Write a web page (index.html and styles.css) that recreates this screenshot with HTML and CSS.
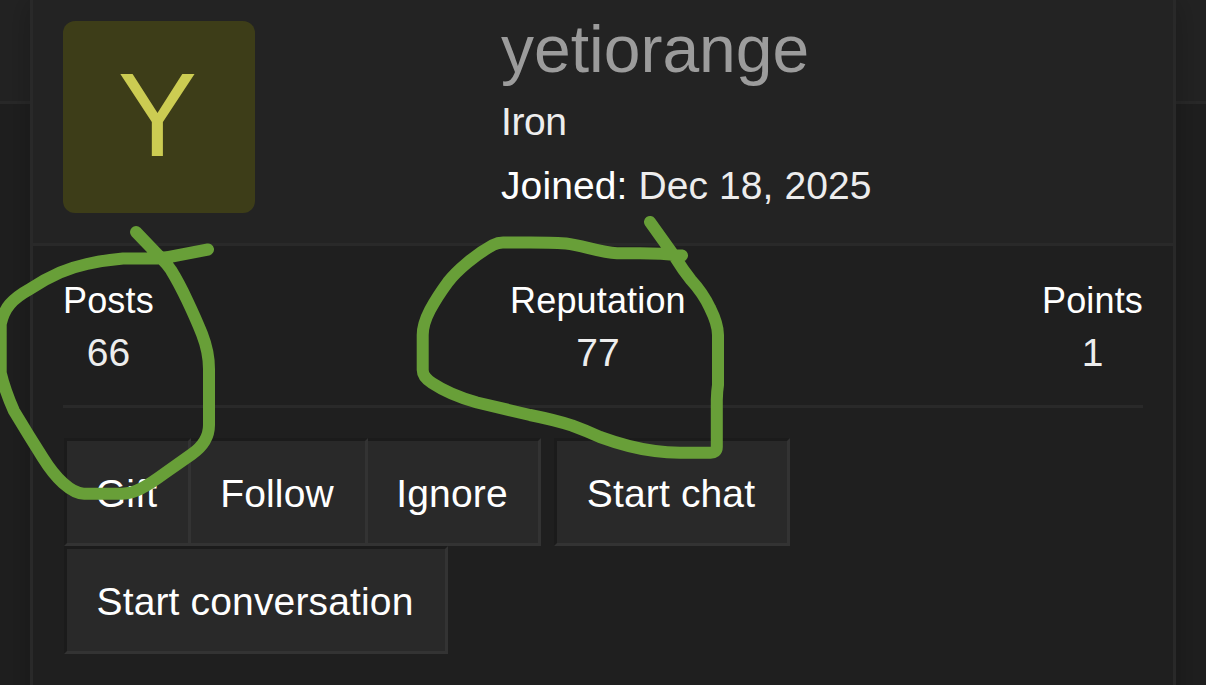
FILE: index.html
```html
<!DOCTYPE html>
<html lang="en">
<head>
  <meta charset="UTF-8">
  <meta name="viewport" content="width=device-width, initial-scale=1.0">
  <title>yetiorange</title>
  <link rel="stylesheet" href="styles.css">
</head>
<body>
  <div class="page">
    <div class="member-card">
      <div class="card-header">
        <div class="avatar">Y</div>
        <div class="member-info">
          <h1 class="member-name">yetiorange</h1>
          <div class="member-title">Iron</div>
          <div class="member-joined"><span class="label">Joined:</span> Dec 18, 2025</div>
        </div>
      </div>

      <div class="card-body">
        <dl class="stats">
          <div class="stat">
            <dt>Posts</dt>
            <dd>66</dd>
          </div>
          <div class="stat">
            <dt>Reputation</dt>
            <dd>77</dd>
          </div>
          <div class="stat">
            <dt>Points</dt>
            <dd>1</dd>
          </div>
        </dl>

        <div class="actions">
          <div class="button-group">
            <button class="button button-gift">Gift</button>
            <button class="button button-follow">Follow</button>
            <button class="button button-ignore">Ignore</button>
          </div>
          <button class="button button-chat">Start chat</button>
          <button class="button button-conversation">Start conversation</button>
        </div>
      </div>
    </div>

    <!-- hand-drawn circles over Posts and Reputation -->
    <svg class="marker" width="1206" height="685" viewBox="0 0 1206 685">
      <path d="M208 249.500 L169 257 Q158 259 147 258.500 H123 Q105 260 87 264 Q73 267 60 272.500 Q45 279 30 289 C12 299 4 308 .7 324 V373 Q5 391 14 411 Q29 436 43 458 Q53 474 63 483 Q75 493.700 84 493.700 H122 Q132 493.500 142 488 Q150 484 165 473 L192 454 Q209 442 209 425 V369 Q209 352 202 334 Q196 319 187 300 Q179 283 171 270 Q167 264 160 257 L136 232"/>
      <path d="M682 255.500 Q661 253.300 640 253.300 H617 C600 252.500 583 245.500 566 243.500 Q550 242.500 530 242.500 H503 Q498 242.500 493 245 Q480 252 467 263 Q455 273 448 282 Q437 297 430 310 Q422.700 324 422.700 335 V370 Q422.700 377 432 383 Q450 395 477 402.500 Q500 408 530 415 Q555 420 572 425.500 Q587 431 600 437 C622 445 638 449 655 451 Q667 452.700 680 452.700 H710 Q716.800 453 716.800 447 V400 Q717 391 718 385 V335 Q718 324 710 308 Q703 293 691 280 Q683 270 675 257 L650 222"/>
    </svg>
  </div>
</body>
</html>
```

FILE: styles.css
```css
* {
  box-sizing: border-box;
}
body {
  margin: 0;
  background-color: #1f1f1f;
  color: #ededed;
  font-family: "Liberation Sans", Arial, sans-serif;
  font-size: 39px;
}
.page {
  position: relative;
  height: 685px;
  padding: 0 30px;
  overflow: hidden;
  background: linear-gradient(#232323 101px, #292929 101px, #292929 104px, #1f1f1f 104px);
}
.member-card {
  height: 760px;
  border: 3px solid #292929;
  border-top: none;
  background-color: #1f1f1f;
  box-shadow: 0 0 30px rgba(0, 0, 0, 0.25);
}
.card-header {
  display: flex;
  height: 246px;
  padding: 21px 30px 0;
  background-color: #232323;
  border-bottom: 3px solid #292929;
}
.avatar {
  width: 192px;
  height: 192px;
  padding-right: 3px;
  border-radius: 12px;
  background-color: #3d3d18;
  color: #cccc52;
  font-size: 119px;
  line-height: 188px;
  text-align: center;
}
.member-info {
  margin-left: 246px;
}
.member-name {
  margin: -11px 0 2px;
  color: #9c9c9c;
  font-size: 66px;
  font-weight: 400;
  line-height: 78px;
}
.member-title {
  letter-spacing: -0.4px;
  line-height: 64px;
}
.member-joined {
  letter-spacing: 0.1px;
  line-height: 64px;
}
.label {
  color: #fff;
}
.card-body {
  padding: 30px 30px 0;
}
.stats {
  display: flex;
  justify-content: space-between;
  height: 132px;
  margin: 0 0 30px;
  border-bottom: 3px solid #292929;
  text-align: center;
}
.stat dt {
  color: #fff;
  font-size: 36px;
  letter-spacing: 0.15px;
  line-height: 49px;
}
.stat dd {
  margin: 0;
  line-height: 56px;
}
.actions {
  display: flex;
  flex-wrap: wrap;
  padding-left: 1px;
}
.button-group {
  display: flex;
  margin-right: 13px;
}
.button {
  height: 108px;
  padding: 4px 2px 0 0;
  border: 3px solid;
  border-color: #1b1b1b #333 #333 #1b1b1b;
  background-color: #292929;
  color: #fff;
  font-family: inherit;
  font-size: 39px;
  letter-spacing: 0.15px;
}
.button-gift {
  width: 127px;
}
.button-follow {
  width: 177px;
  border-left: none;
}
.button-ignore {
  width: 173px;
  border-left: none;
}
.button-chat {
  width: 236px;
}
.button-conversation {
  width: 384px;
}
.marker {
  position: absolute;
  top: 0;
  left: 0;
  fill: none;
  stroke: #689f38;
  stroke-width: 12;
  stroke-linecap: round;
  stroke-linejoin: round;
}
```
